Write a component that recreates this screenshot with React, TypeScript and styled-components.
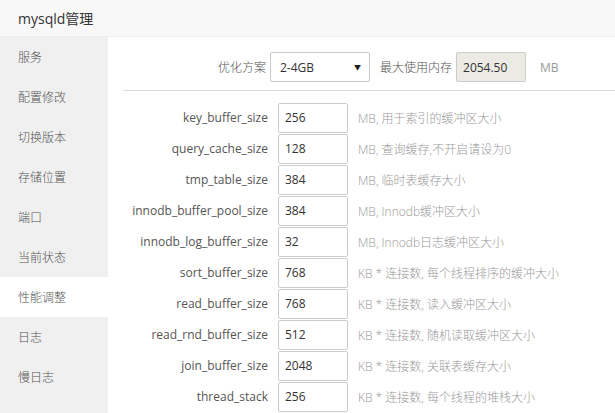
import React from "react";
import styled, { createGlobalStyle } from "styled-components";

const GlobalStyle = createGlobalStyle`
  html, body {
    margin: 0;
    padding: 0;
    background: #fff;
    overflow: hidden;
  }
  body {
    font-family: "Open Sans", "Noto Sans CJK SC", sans-serif;
    color: #555;
  }
`;

const menu = ["服务", "配置修改", "切换版本", "存储位置", "端口", "当前状态", "性能调整", "日志", "慢日志"];

const params = [
  { name: "key_buffer_size", value: "256", desc: "MB, 用于索引的缓冲区大小" },
  { name: "query_cache_size", value: "128", desc: "MB, 查询缓存,不开启请设为0" },
  { name: "tmp_table_size", value: "384", desc: "MB, 临时表缓存大小" },
  { name: "innodb_buffer_pool_size", value: "384", desc: "MB, Innodb缓冲区大小" },
  { name: "innodb_log_buffer_size", value: "32", desc: "MB, Innodb日志缓冲区大小" },
  { name: "sort_buffer_size", value: "768", desc: "KB * 连接数, 每个线程排序的缓冲大小" },
  { name: "read_buffer_size", value: "768", desc: "KB * 连接数, 读入缓冲区大小" },
  { name: "read_rnd_buffer_size", value: "512", desc: "KB * 连接数, 随机读取缓冲区大小" },
  { name: "join_buffer_size", value: "2048", desc: "KB * 连接数, 关联表缓存大小" },
  { name: "thread_stack", value: "256", desc: "KB * 连接数, 每个线程的堆栈大小" },
];

const PageStyled = styled.div`
  width: 615px;
  height: 413px;
  display: flex;
  flex-direction: column;
`;

const HeaderStyled = styled.div`
  height: 36px;
  flex-shrink: 0;
  display: flex;
  align-items: center;
  padding-left: 18px;
  background: #f8f8f8;
  border-bottom: 1px solid #eeeeee;
  font-size: 14px;
  color: #333;
`;

const BodyStyled = styled.div`
  flex: 1;
  display: flex;
  min-height: 0;
`;

const SidebarStyled = styled.ul`
  width: 108px;
  flex-shrink: 0;
  margin: 0;
  padding: 0;
  list-style: none;
  background: #f0f0f0;
`;

const MenuItemStyled = styled.li<{ $active?: boolean }>`
  height: 40px;
  line-height: 41px;
  padding-left: 18px;
  font-size: 12px;
  font-weight: 300;
  color: #555;
  background: ${(p) => (p.$active ? "#fff" : "transparent")};
`;

const ContentStyled = styled.div`
  flex: 1;
  padding: 15px 0 0 15px;
  min-width: 0;
`;

const TopRowStyled = styled.div`
  display: flex;
  align-items: center;
  height: 30px;
  padding-bottom: 8px;
  border-bottom: 1px solid #dddddd;
  font-size: 12px;
`;

const TopLabelStyled = styled.span<{ $width?: number }>`
  width: ${(p) => (p.$width ? `${p.$width}px` : "auto")};
  text-align: right;
  margin-right: 4px;
  font-weight: 300;
  color: #555;
`;

const SelectWrapStyled = styled.div`
  position: relative;
  width: 100px;
  height: 30px;
  margin-right: 10px;
`;

const SelectStyled = styled.select`
  appearance: none;
  width: 100%;
  height: 100%;
  box-sizing: border-box;
  border: 1px solid #ccc;
  border-radius: 2px;
  background: #fff;
  padding: 0 0 0 9px;
  font-family: inherit;
  font-size: 12px;
  color: #333;
  outline: none;
`;

const ArrowStyled = styled.span`
  position: absolute;
  right: 9px;
  top: 10px;
  font-size: 7px;
  color: #222;
  pointer-events: none;
`;

const InputStyled = styled.input<{ $disabled?: boolean }>`
  width: 70px;
  height: 30px;
  box-sizing: border-box;
  border: 1px solid #ccc;
  border-radius: 2px;
  padding: 0 0 0 6px;
  font-family: inherit;
  font-size: 12px;
  color: #333;
  background: ${(p) => (p.$disabled ? "#ebebe4" : "#fff")};
  outline: none;
`;

const UnitStyled = styled.span`
  margin-left: 14px;
  color: #999;
`;

const ParamListStyled = styled.div`
  padding-top: 11px;
`;

const ParamRowStyled = styled.div`
  display: grid;
  grid-template-columns: 145px 70px auto;
  column-gap: 10px;
  align-items: center;
  height: 31px;
  font-size: 12px;
  white-space: nowrap;
`;

const ParamLabelStyled = styled.span`
  text-align: right;
  color: #555;
`;

const DescStyled = styled.span`
  color: #999;
  font-weight: 300;
`;

function App() {
  return (
    <PageStyled>
      <GlobalStyle />
      <HeaderStyled>mysqld管理</HeaderStyled>
      <BodyStyled>
        <SidebarStyled>
          {menu.map((m) => (
            <MenuItemStyled key={m} $active={m === "性能调整"}>
              {m}
            </MenuItemStyled>
          ))}
        </SidebarStyled>
        <ContentStyled>
          <TopRowStyled>
            <TopLabelStyled $width={143}>优化方案</TopLabelStyled>
            <SelectWrapStyled>
              <SelectStyled defaultValue="2-4GB">
                <option>1-2GB</option>
                <option>2-4GB</option>
                <option>4-8GB</option>
              </SelectStyled>
              <ArrowStyled>▼</ArrowStyled>
            </SelectWrapStyled>
            <TopLabelStyled>最大使用内存</TopLabelStyled>
            <InputStyled $disabled disabled defaultValue="2054.50" />
            <UnitStyled>MB</UnitStyled>
          </TopRowStyled>
          <ParamListStyled>
            {params.map((p) => (
              <ParamRowStyled key={p.name}>
                <ParamLabelStyled>{p.name}</ParamLabelStyled>
                <InputStyled defaultValue={p.value} />
                <DescStyled>{p.desc}</DescStyled>
              </ParamRowStyled>
            ))}
          </ParamListStyled>
        </ContentStyled>
      </BodyStyled>
    </PageStyled>
  );
}

export default App;
